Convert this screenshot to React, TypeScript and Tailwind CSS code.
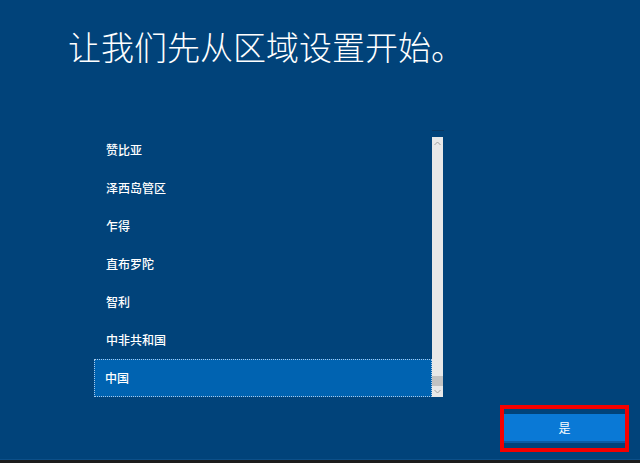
import React from "react";

const items = ["赞比亚", "泽西岛管区", "乍得", "直布罗陀", "智利", "中非共和国", "中国"];

export default function App() {
  return (
    <div
      className="w-[640px] h-[463px] bg-[#01437a] flex flex-col overflow-hidden"
      style={{ fontFamily: '"Noto Sans CJK SC", "Noto Sans", sans-serif' }}
    >
      <div className="pt-[30px] pl-[68px] text-white text-[33px] leading-none font-light h-[130px]">
        让我们先从区域设置开始。
      </div>
      <div className="flex ml-[94px] w-[349px] h-[260px] mt-[7px] relative">
        <div className="absolute left-[338px] -top-[7px] w-[12px] h-px bg-[#0a3760]" />
        <div className="flex-1 overflow-hidden">
          <div className="-mt-[6px] flex flex-col">
            {items.map((t, i) => {
              const sel = i === items.length - 1;
              return (
                <div
                  key={t}
                  className={
                    sel
                      ? "h-[38px] flex items-center pl-[11px] text-white text-[12px] font-medium bg-[#0063b1] outline-1 outline-dotted outline-[#a9c8e8] -outline-offset-1"
                      : "h-[38px] flex items-center pl-[12px] text-white text-[12px] font-medium"
                  }
                >
                  {t}
                </div>
              );
            })}
          </div>
        </div>
        <div className="w-[11px] bg-[#e8e8e8] flex flex-col items-center">
          <svg width="9" height="9" viewBox="0 0 9 9" className="mt-[2px]">
            <path d="M1.5 6 L4.5 3 L7.5 6" stroke="#a0a0a0" strokeWidth="1" fill="none" />
          </svg>
          <div className="flex-1" />
          <div className="w-full h-[10px] bg-[#c2c2c2]" />
          <svg width="9" height="9" viewBox="0 0 9 9" className="my-[1px]">
            <path d="M1.5 3 L4.5 6 L7.5 3" stroke="#a0a0a0" strokeWidth="1" fill="none" />
          </svg>
        </div>
      </div>
      <div className="flex justify-end pr-[15px] mt-[17px]">
        <div className="relative">
          <button className="w-[121px] h-[29px] bg-[#0a79d6] border-b-2 border-[#0a5ca6] text-white text-[12px] flex items-center justify-center">
            是
          </button>
          <div className="absolute -left-[4px] -right-[4px] -top-[9px] -bottom-[9px] border-4 border-[#f50000]" />
        </div>
      </div>
      <div className="flex-1" />
      <div className="h-px bg-[#0c4f88]" />
      <div className="h-[3px] bg-[#1c1c1c]" />
    </div>
  );
}
